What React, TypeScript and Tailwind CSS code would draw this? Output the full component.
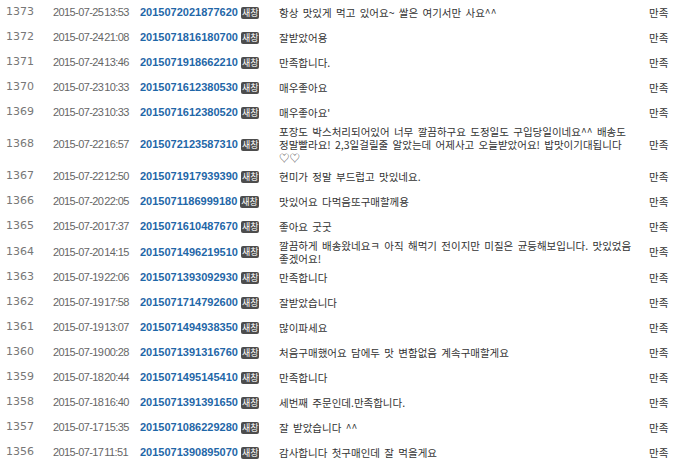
const reviews = [
  { no: 1373, date: '2015-07-25', time: '13:53', order: '2015072021877620', lines: ['항상 맛있게 먹고 있어요~ 쌀은 여기서만 사요^^'] },
  { no: 1372, date: '2015-07-24', time: '21:08', order: '2015071816180700', lines: ['잘받았어용'] },
  { no: 1371, date: '2015-07-24', time: '13:46', order: '2015071918662210', lines: ['만족합니다.'] },
  { no: 1370, date: '2015-07-23', time: '10:33', order: '2015071612380530', lines: ['매우좋아요'] },
  { no: 1369, date: '2015-07-23', time: '10:33', order: '2015071612380520', lines: ["매우좋아요'"] },
  {
    no: 1368,
    date: '2015-07-22',
    time: '16:57',
    order: '2015072123587310',
    lines: [
      '포장도 박스처리되어있어 너무 깔끔하구요 도정일도 구입당일이네요^^ 배송도',
      '정말빨라요! 2,3일걸릴줄 알았는데 어제사고 오늘받았어요! 밥맛이기대됩니다',
      '♡♡',
    ],
  },
  { no: 1367, date: '2015-07-22', time: '12:50', order: '2015071917939390', lines: ['현미가 정말 부드럽고 맛있네요.'] },
  { no: 1366, date: '2015-07-20', time: '22:05', order: '2015071186999180', lines: ['맛있어요 다먹음또구매할께용'] },
  { no: 1365, date: '2015-07-20', time: '17:37', order: '2015071610487670', lines: ['좋아요 굿굿'] },
  {
    no: 1364,
    date: '2015-07-20',
    time: '14:15',
    order: '2015071496219510',
    lines: ['깔끔하게 배송왔네요ㅋ 아직 해먹기 전이지만 미질은 균등해보입니다. 맛있었음', '좋겠어요!'],
  },
  { no: 1363, date: '2015-07-19', time: '22:06', order: '2015071393092930', lines: ['만족합니다'] },
  { no: 1362, date: '2015-07-19', time: '17:58', order: '2015071714792600', lines: ['잘받았습니다'] },
  { no: 1361, date: '2015-07-19', time: '13:07', order: '2015071494938350', lines: ['많이파세요'] },
  { no: 1360, date: '2015-07-19', time: '00:28', order: '2015071391316760', lines: ['처음구매했어요 담에두 맛 변함없음 계속구매할게요'] },
  { no: 1359, date: '2015-07-18', time: '20:44', order: '2015071495145410', lines: ['만족합니다'] },
  { no: 1358, date: '2015-07-18', time: '16:40', order: '2015071391391650', lines: ['세번째 주문인데.만족합니다.'] },
  { no: 1357, date: '2015-07-17', time: '15:35', order: '2015071086229280', lines: ['잘 받았습니다 ^^'] },
  { no: 1356, date: '2015-07-17', time: '11:51', order: '2015071390895070', lines: ['감사합니다 첫구매인데 잘 먹을게요'] },
];

const kr = "font-['Noto_Sans_CJK_KR',sans-serif]";

export default function App() {
  return (
    <div className="w-[686px] bg-white">
      {reviews.map((r) => (
        <div key={r.no} className="flex min-h-[25px] items-center">
          {/* No */}
          <div className="w-[48px] pl-[6px] font-['DejaVu_Sans',sans-serif] text-[11px] text-[#777]">
            {r.no}
          </div>

          {/* Date */}
          <div className="w-[87px] pl-[5px] font-['Liberation_Sans',sans-serif] text-[11px] tracking-[-0.6px] text-[#666]">
            {r.date}
            <span className="ml-[1px]">{r.time}</span>
          </div>

          {/* Order no + badge */}
          <div className="flex w-[139px] items-center pl-[5px]">
            <span className="font-['Liberation_Sans',sans-serif] text-[11px] font-bold text-[#1f67a8]">
              {r.order}
            </span>
            <span
              className={`ml-[3px] rounded-[2px] bg-[#4d4d4d] px-[1px] text-[9px] leading-[12px] text-white ${kr}`}
            >
              새창
            </span>
          </div>

          {/* Comment */}
          <div className={`flex-1 pl-[5px] text-[10.5px] leading-[13px] text-[#333] [word-spacing:2px] ${kr}`}>
            {r.lines.map((line, i) => (
              <div key={i} className="whitespace-nowrap">
                {line}
              </div>
            ))}
          </div>

          {/* Rating */}
          <div className={`w-[46px] pl-[9px] text-[10.5px] text-[#333] ${kr}`}>만족</div>
        </div>
      ))}
    </div>
  );
}
